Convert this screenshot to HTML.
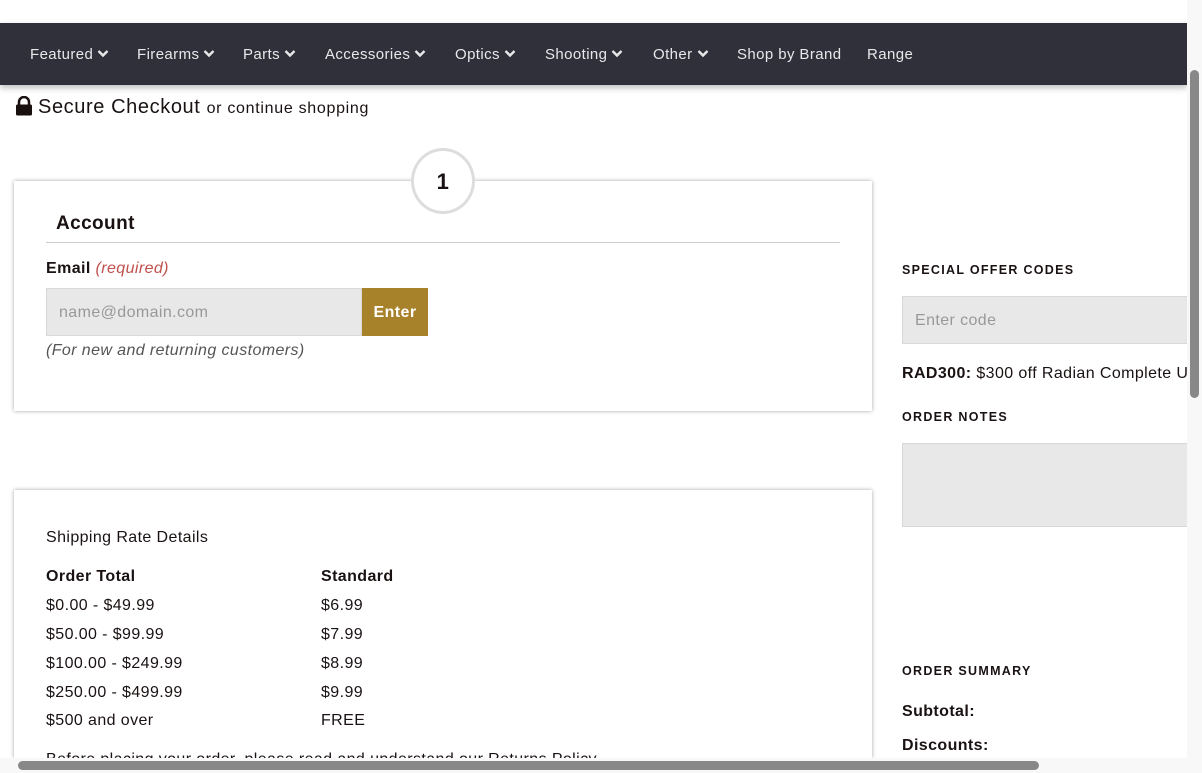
<!DOCTYPE html>
<html style="width:1202px;height:773px;overflow:hidden"><head><style>
*{box-sizing:border-box;margin:0;padding:0}
body{width:1202px;height:773px;overflow:hidden;background:#fff;font-family:"Liberation Sans",sans-serif;color:#1a1212;position:relative;letter-spacing:0.4px}
.abs{position:absolute}
.nav{left:0;top:23px;width:1187px;height:62px;background:#30303b;box-shadow:0 3px 6px rgba(0,0,0,.25)}
.nav span{position:absolute;top:23px;color:#e8e8ea;font-size:15px;white-space:nowrap}
.nav svg{margin-left:4px;vertical-align:1px}
.card{background:#fff;box-shadow:0 0 4px rgba(0,0,0,.35)}
.t{position:absolute;font-size:16px;white-space:nowrap}
.lab{position:absolute;font-size:12.5px;font-weight:bold;letter-spacing:1.3px;white-space:nowrap}
</style></head><body>
<div class="abs nav">
<span style="left:30px">Featured<svg width="12" height="9" viewBox="0 0 12 9"><path d="M1.5 2l4.5 4.5L10.5 2" fill="none" stroke="#e8e8ea" stroke-width="2.4"/></svg></span>
<span style="left:137px">Firearms<svg width="12" height="9" viewBox="0 0 12 9"><path d="M1.5 2l4.5 4.5L10.5 2" fill="none" stroke="#e8e8ea" stroke-width="2.4"/></svg></span>
<span style="left:243px">Parts<svg width="12" height="9" viewBox="0 0 12 9"><path d="M1.5 2l4.5 4.5L10.5 2" fill="none" stroke="#e8e8ea" stroke-width="2.4"/></svg></span>
<span style="left:325px">Accessories<svg width="12" height="9" viewBox="0 0 12 9"><path d="M1.5 2l4.5 4.5L10.5 2" fill="none" stroke="#e8e8ea" stroke-width="2.4"/></svg></span>
<span style="left:455px">Optics<svg width="12" height="9" viewBox="0 0 12 9"><path d="M1.5 2l4.5 4.5L10.5 2" fill="none" stroke="#e8e8ea" stroke-width="2.4"/></svg></span>
<span style="left:545px">Shooting<svg width="12" height="9" viewBox="0 0 12 9"><path d="M1.5 2l4.5 4.5L10.5 2" fill="none" stroke="#e8e8ea" stroke-width="2.4"/></svg></span>
<span style="left:653px">Other<svg width="12" height="9" viewBox="0 0 12 9"><path d="M1.5 2l4.5 4.5L10.5 2" fill="none" stroke="#e8e8ea" stroke-width="2.4"/></svg></span>
<span style="left:737px">Shop by Brand</span>
<span style="left:867px">Range</span>
</div>
<svg class="abs" style="left:15px;top:96px" width="18" height="20" viewBox="0 0 18 20"><path d="M4 9V6a5 5 0 0 1 10 0v3" fill="none" stroke="#1a0f0f" stroke-width="2.5"/><rect x="1" y="8.5" width="16" height="11" rx="1.5" fill="#1a0f0f"/></svg>
<div class="t" style="left:38px;top:96px;font-size:20px;letter-spacing:0.6px">Secure Checkout <span style="font-size:16px;letter-spacing:0.7px">or continue shopping</span></div>

<div class="abs card" style="left:14px;top:181px;width:858px;height:230px"></div>
<div class="abs" style="left:411px;top:148px;width:64px;height:66px;border-radius:50%;border:3px solid #ddd;background:#fff;text-align:center;line-height:62px;font-size:22px;font-weight:bold">1</div>
<div class="t" style="left:56px;top:213px;font-size:19px;font-weight:bold;color:#1a1212">Account</div>
<div class="abs" style="left:46px;top:242px;width:794px;height:1px;background:#ccc"></div>
<div class="t" style="left:46px;top:260px;font-weight:bold">Email <i style="font-weight:normal;color:#c0504d">(required)</i></div>
<div class="abs" style="left:46px;top:288px;width:316px;height:48px;background:#e8e8e8;border:1px solid #d8d8d8"></div>
<div class="t" style="left:59px;top:304px;color:#999">name@domain.com</div>
<div class="abs" style="left:362px;top:288px;width:66px;height:48px;background:#a8822a;color:#fff;font-weight:bold;font-size:16px;text-align:center;line-height:50px">Enter</div>
<div class="t" style="left:46px;top:342px;font-style:italic;color:#555">(For new and returning customers)</div>

<div class="abs card" style="left:14px;top:490px;width:858px;height:268px"></div>
<div class="t" style="left:46px;top:529px">Shipping Rate Details</div>
<div class="t" style="left:46px;top:568px;font-weight:bold">Order Total</div>
<div class="t" style="left:321px;top:568px;font-weight:bold">Standard</div>
<div class="t" style="left:46px;top:597px">$0.00 - $49.99</div><div class="t" style="left:321px;top:597px">$6.99</div>
<div class="t" style="left:46px;top:626px">$50.00 - $99.99</div><div class="t" style="left:321px;top:626px">$7.99</div>
<div class="t" style="left:46px;top:655px">$100.00 - $249.99</div><div class="t" style="left:321px;top:655px">$8.99</div>
<div class="t" style="left:46px;top:684px">$250.00 - $499.99</div><div class="t" style="left:321px;top:684px">$9.99</div>
<div class="t" style="left:46px;top:712px">$500 and over</div><div class="t" style="left:321px;top:712px">FREE</div>
<div class="t" style="left:46px;top:751px">Before placing your order, please read and understand our Returns Policy</div>

<div class="lab" style="left:902px;top:263px">SPECIAL OFFER CODES</div>
<div class="abs" style="left:902px;top:296px;width:290px;height:48px;background:#e8e8e8;border:1px solid #d8d8d8"></div>
<div class="t" style="left:915px;top:312px;color:#999">Enter code</div>
<div class="t" style="left:902px;top:365px"><b>RAD300:</b> $300 off Radian Complete Upper</div>
<div class="lab" style="left:902px;top:410px">ORDER NOTES</div>
<div class="abs" style="left:902px;top:443px;width:290px;height:84px;background:#e8e8e8;border:1px solid #d8d8d8"></div>
<div class="lab" style="left:902px;top:664px">ORDER SUMMARY</div>
<div class="t" style="left:902px;top:703px;font-weight:bold">Subtotal:</div>
<div class="t" style="left:902px;top:737px;font-weight:bold">Discounts:</div>

<div class="abs" style="left:1187px;top:0;width:15px;height:773px;background:#f8f8f8"></div>
<div class="abs" style="left:1190px;top:70px;width:9px;height:328px;background:#888;border-radius:5px"></div>
<div class="abs" style="left:0;top:758px;width:1202px;height:15px;background:#f8f8f8"></div>
<div class="abs" style="left:18px;top:761px;width:1021px;height:9px;background:#888;border-radius:5px"></div>
</body></html>
